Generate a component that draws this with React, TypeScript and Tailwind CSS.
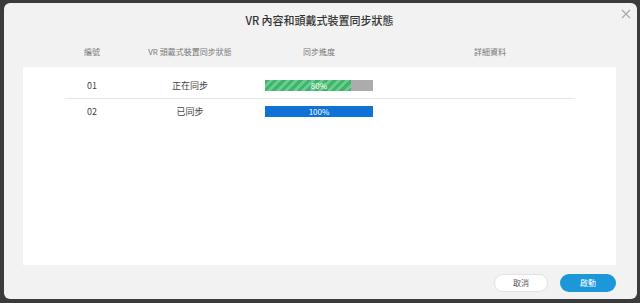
import React from "react";

const font = { fontFamily: '"Noto Sans CJK TC", "Noto Sans", sans-serif' };

function Bar({ pct, striped }: { pct: number; striped?: boolean }) {
  return (
    <div className="relative w-[108px] h-[11px] bg-[#acacac] overflow-hidden">
      <div
        className={
          striped
            ? "h-full bg-[repeating-linear-gradient(135deg,#3fb56c_0px,#3fb56c_3px,#6ccb90_3px,#6ccb90_6px)]"
            : "h-full bg-[#0f72d4]"
        }
        style={{ width: `${pct}%` }}
      />
      <div className="absolute inset-0 flex items-center justify-center text-[8px] leading-none text-white">
        {pct}%
      </div>
    </div>
  );
}

export default function App() {
  const rows = [
    { id: "01", status: "正在同步", pct: 80, striped: true },
    { id: "02", status: "已同步", pct: 100, striped: false },
  ];
  return (
    <div className="w-[640px] h-[303px] bg-[#3b3b3b] pl-[4px] pt-[3px]" style={font}>
      <div className="relative w-[633px] h-[296px] bg-[#f2f2f2] rounded-[6px] flex flex-col pl-[19px] pr-[21px]">
        <button className="absolute right-[6px] top-[6px] text-[#a8a8a8]">
          <svg width="10" height="10" viewBox="0 0 10 10" fill="none" stroke="currentColor" strokeWidth="1.1">
            <path d="M1 1 L9 9 M9 1 L1 9" />
          </svg>
        </button>
        <div className="h-[34px] flex items-center justify-center text-[11px] font-medium text-[#333]">
          VR 內容和頭戴式裝置同步狀態
        </div>
        <div className="h-[30px] pl-[42px] grid grid-cols-[54px_142px_116px_226px] items-center text-[8px] text-[#777]">
          <div className="text-center">編號</div>
          <div className="text-center">VR 頭戴式裝置同步狀態</div>
          <div className="text-center">同步進度</div>
          <div className="text-center">詳細資料</div>
        </div>
        <div className="h-[198px] bg-white pt-[6px] pl-[42px]">
          {rows.map((r, i) => (
            <div key={r.id}>
              {i > 0 && <div className="w-[510px] h-px bg-[#e8e8e8]" />}
              <div className="h-[25px] grid grid-cols-[54px_142px_116px_226px] items-center text-[9px] text-[#444]">
                <div className="text-center">{r.id}</div>
                <div className="text-center pt-[1px]">{r.status}</div>
                <div className="flex justify-center">
                  <Bar pct={r.pct} striped={r.striped} />
                </div>
                <div />
              </div>
            </div>
          ))}
        </div>
        <div className="flex justify-end gap-[12px] mt-[9px]">
          <button className="w-[54px] h-[18px] rounded-full bg-white border border-[#e2e2e2] text-[8px] text-[#555]">
            取消
          </button>
          <button className="w-[56px] h-[18px] rounded-full bg-[#1c97d8] text-[8px] text-white">
            啟動
          </button>
        </div>
      </div>
    </div>
  );
}
